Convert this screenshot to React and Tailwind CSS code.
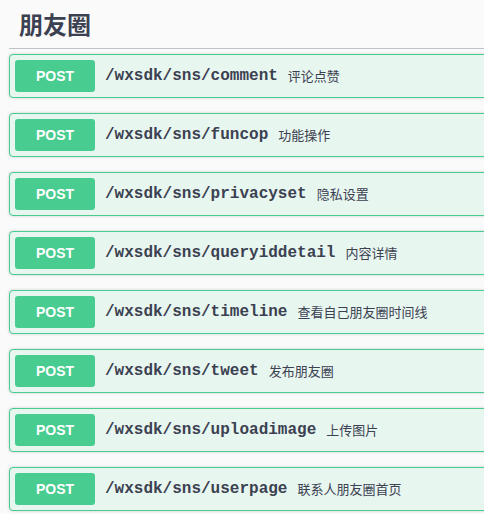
import React from "react";

const ops = [
  ["/wxsdk/sns/comment", "评论点赞"],
  ["/wxsdk/sns/funcop", "功能操作"],
  ["/wxsdk/sns/privacyset", "隐私设置"],
  ["/wxsdk/sns/queryiddetail", "内容详情"],
  ["/wxsdk/sns/timeline", "查看自己朋友圈时间线"],
  ["/wxsdk/sns/tweet", "发布朋友圈"],
  ["/wxsdk/sns/uploadimage", "上传图片"],
  ["/wxsdk/sns/userpage", "联系人朋友圈首页"],
];

export default function App() {
  return (
    <div className="w-[484px] h-[514px] overflow-hidden bg-[#fafafa]">
      <div className="w-[560px] pl-[9px]">
        <h3 className="py-[10px] pl-[10px] text-[24px] leading-[28px] font-bold text-[#3b4151] border-b border-[rgba(59,65,81,0.3)] mb-[5px] font-['Noto_Sans_CJK_SC',sans-serif]">
          朋友圈
        </h3>
        {ops.map(([path, desc]) => (
          <div
            key={path}
            className="mb-[15px] border border-[#49cc90] rounded-[4px] bg-[#e8f6f0] shadow-[0_0_3px_rgba(0,0,0,0.19)] flex items-center p-[5px]"
          >
            <span className="w-[80px] h-[32px] flex items-center justify-center rounded-[3px] bg-[#49cc90] text-white text-[14px] font-bold font-['Liberation_Sans',Arial,sans-serif]">
              POST
            </span>
            <span className="px-[10px] text-[16px] font-bold text-[#3b4151] font-['Liberation_Mono','Courier_New',monospace]">
              {path}
            </span>
            <span className="text-[13px] text-[#3b4151] font-['Noto_Sans_CJK_SC',sans-serif]">
              {desc}
            </span>
          </div>
        ))}
      </div>
    </div>
  );
}
